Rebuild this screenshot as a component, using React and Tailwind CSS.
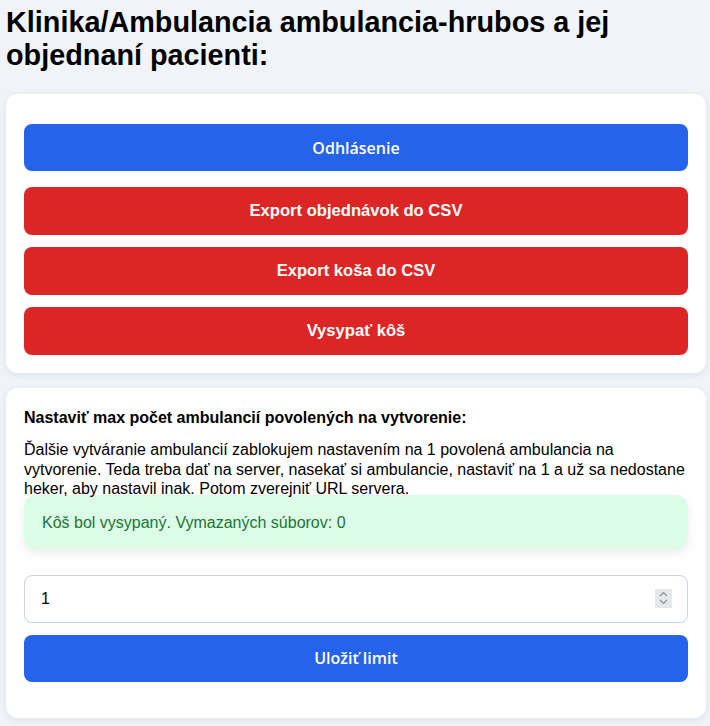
import { useState } from "react";

export default function App() {
  const [limit, setLimit] = useState(1);

  return (
    <main className="min-h-screen bg-[#f0f4f8] pl-[6px] pr-[4px] pt-[6px] pb-6 font-['Liberation_Sans',Arial,sans-serif] text-black">
      <h1 className="text-[28.8px] leading-[33px] font-bold mb-[22px]">
        Klinika/Ambulancia ambulancia-hrubos a jej objednaní pacienti:
      </h1>

      <section className="bg-white rounded-xl shadow-[0_2px_8px_rgba(15,23,42,0.08)] px-[18px] pt-[30px] pb-[18px] flex flex-col">
        <button className="h-[47px] w-full bg-[#2563eb] text-white rounded-lg font-['Open_Sans',sans-serif] font-semibold text-base mb-[16px]">
          Odhlásenie
        </button>
        <div className="flex flex-col gap-3">
          <button className="h-[48px] w-full bg-[#dc2626] text-white rounded-lg font-bold text-[16.6px]">
            Export objednávok do CSV
          </button>
          <button className="h-[48px] w-full bg-[#dc2626] text-white rounded-lg font-bold text-[16.6px]">
            Export koša do CSV
          </button>
          <button className="h-[48px] w-full bg-[#dc2626] text-white rounded-lg font-bold text-[16.6px]">
            Vysypať kôš
          </button>
        </div>
      </section>

      <section className="mt-[15px] bg-white rounded-xl shadow-[0_2px_8px_rgba(15,23,42,0.08)] px-[18px] pt-[21px] pb-[36px]">
        <h2 className="text-base leading-[18px] font-bold mb-[13px]">
          Nastaviť max počet ambulancií povolených na vytvorenie:
        </h2>
        <p className="text-base leading-[19.5px]">
          Ďalšie vytváranie ambulancií zablokujem nastavením na 1 povolená
          ambulancia na vytvorenie. Teda treba dať na server, nasekať si
          ambulancie, nastaviť na 1 a už sa nedostane heker, aby nastavil inak.
          Potom zverejniť URL servera.
        </p>
        <div className="mt-[-4px] h-[54px] flex items-center px-[18px] pt-[2px] bg-[#dcfce7] text-[#1b7536] rounded-xl shadow-[0_4px_10px_rgba(0,0,0,0.08)]">
          Kôš bol vysypaný. Vymazaných súborov: 0
        </div>
        <form
          className="mt-[26px] flex flex-col gap-3"
          onSubmit={(e) => e.preventDefault()}
        >
          <div className="relative">
            <input
              type="text"
              value={limit}
              onChange={(e) => setLimit(e.target.value)}
              className="w-full h-[48px] border border-[#cbd5e1] rounded-lg px-4 text-base outline-none"
            />
            <div className="absolute right-[16px] top-[14px] w-[17px] h-[19px] bg-[#e5e7eb] flex flex-col items-center justify-center">
              <svg width="9" height="16" viewBox="0 0 9 16" fill="none" stroke="#8a8f98" strokeWidth="1.1">
                <path d="M1 6 L4.5 2.5 L8 6" />
                <path d="M1 10 L4.5 13.5 L8 10" />
              </svg>
            </div>
          </div>
          <button
            type="submit"
            className="h-[47px] w-full bg-[#2563eb] text-white rounded-lg font-['Open_Sans',sans-serif] font-semibold text-base"
          >
            Uložiť limit
          </button>
        </form>
      </section>
    </main>
  );
}
